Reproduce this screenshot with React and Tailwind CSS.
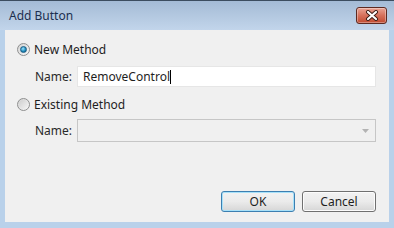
import React from "react";

function Radio({ checked }) {
  return (
    <div className="w-[13px] h-[13px] rounded-full border border-[#8e8f8f] bg-gradient-to-br from-[#d4d4d4] to-[#f8f8f8] flex items-center justify-center shrink-0">
      {checked ? (
        <div className="w-[7px] h-[7px] rounded-full bg-[radial-gradient(circle_at_40%_35%,#9be3ff,#1a88b8_60%,#0d4f73)] border border-[#1b5c84]" />
      ) : (
        <div className="w-[9px] h-[9px] rounded-full bg-gradient-to-br from-[#cfcfcf] to-[#f4f4f4]" />
      )}
    </div>
  );
}

export default function App() {
  return (
    <div
      className="w-[394px] h-[228px] flex flex-col bg-[#b9d1ea] border-t border-[#3c4d60] text-[12px] text-[#1e1e1e]"
      style={{ fontFamily: '"Noto Sans", "Open Sans", sans-serif' }}
    >
      {/* title bar */}
      <div className="h-[29px] flex items-center justify-between bg-gradient-to-b from-[#a4bbd6] via-[#b3c8e0] to-[#c2d5eb] pl-[9px] pr-[7px]">
        <span className="text-[#1c2f4f] leading-none">Add Button</span>
        <div className="w-[31px] h-[17px] mt-[-1px] rounded-[3px] border border-[#5d2a22] bg-gradient-to-b from-[#e9a394] via-[#d6705b] to-[#c04a30] flex items-center justify-center shadow-[inset_0_0_0_1px_rgba(255,255,255,0.35)]">
          <svg width="14" height="11" viewBox="0 0 14 11">
            <path d="M3 2 L11 9 M11 2 L3 9" stroke="#3a1a14" strokeWidth="4" strokeLinecap="round" />
            <path d="M3 2 L11 9 M11 2 L3 9" stroke="#ffffff" strokeWidth="2.2" strokeLinecap="round" />
          </svg>
        </div>
      </div>
      {/* body */}
      <div className="flex flex-1 px-[5px] pb-[6px]">
        <div className="flex-1 bg-[#f0f0f0] flex flex-col pl-[12px] pr-[13px] pt-[13px]">
          <div className="flex items-center gap-[4px] h-[13px]">
            <Radio checked />
            <span className="leading-none">New Method</span>
          </div>
          <div className="flex items-center mt-[10px] pl-[18px]">
            <span className="w-[42px] text-[#2a2a2a]">Name:</span>
            <div className="flex-1 h-[21px] bg-white border border-[#e6e6e6] flex items-center pl-[5px]">
              <span>RemoveControl</span>
              <span className="w-[1px] h-[14px] bg-black" />
            </div>
          </div>
          <div className="flex items-center gap-[4px] h-[13px] mt-[11px]">
            <Radio />
            <span className="leading-none">Existing Method</span>
          </div>
          <div className="flex items-center mt-[8px] pl-[18px]">
            <span className="w-[42px] text-[#2a2a2a]">Name:</span>
            <div className="flex-1 h-[23px] bg-[#f0f0f0] border border-[#c6c6c6] flex items-center justify-end pr-[6px]">
              <svg width="7" height="4" viewBox="0 0 7 4">
                <path d="M0 0 L7 0 L3.5 4 Z" fill="#b3b3b3" />
              </svg>
            </div>
          </div>
          <div className="flex justify-end gap-[7px] mt-[49px]">
            <button className="w-[74px] h-[21px] rounded-[3px] border border-[#3c7fb1] bg-gradient-to-b from-[#f2f2f2] via-[#ebebeb] to-[#d6d6d6] shadow-[inset_0_0_0_1px_#a8e1f9] text-[#1e1e1e] leading-none">
              OK
            </button>
            <button className="w-[74px] h-[21px] rounded-[3px] border border-[#707070] bg-gradient-to-b from-[#f2f2f2] via-[#ebebeb] to-[#d6d6d6] shadow-[inset_0_0_0_1px_#fcfcfc] text-[#1e1e1e] leading-none">
              Cancel
            </button>
          </div>
        </div>
      </div>
    </div>
  );
}
